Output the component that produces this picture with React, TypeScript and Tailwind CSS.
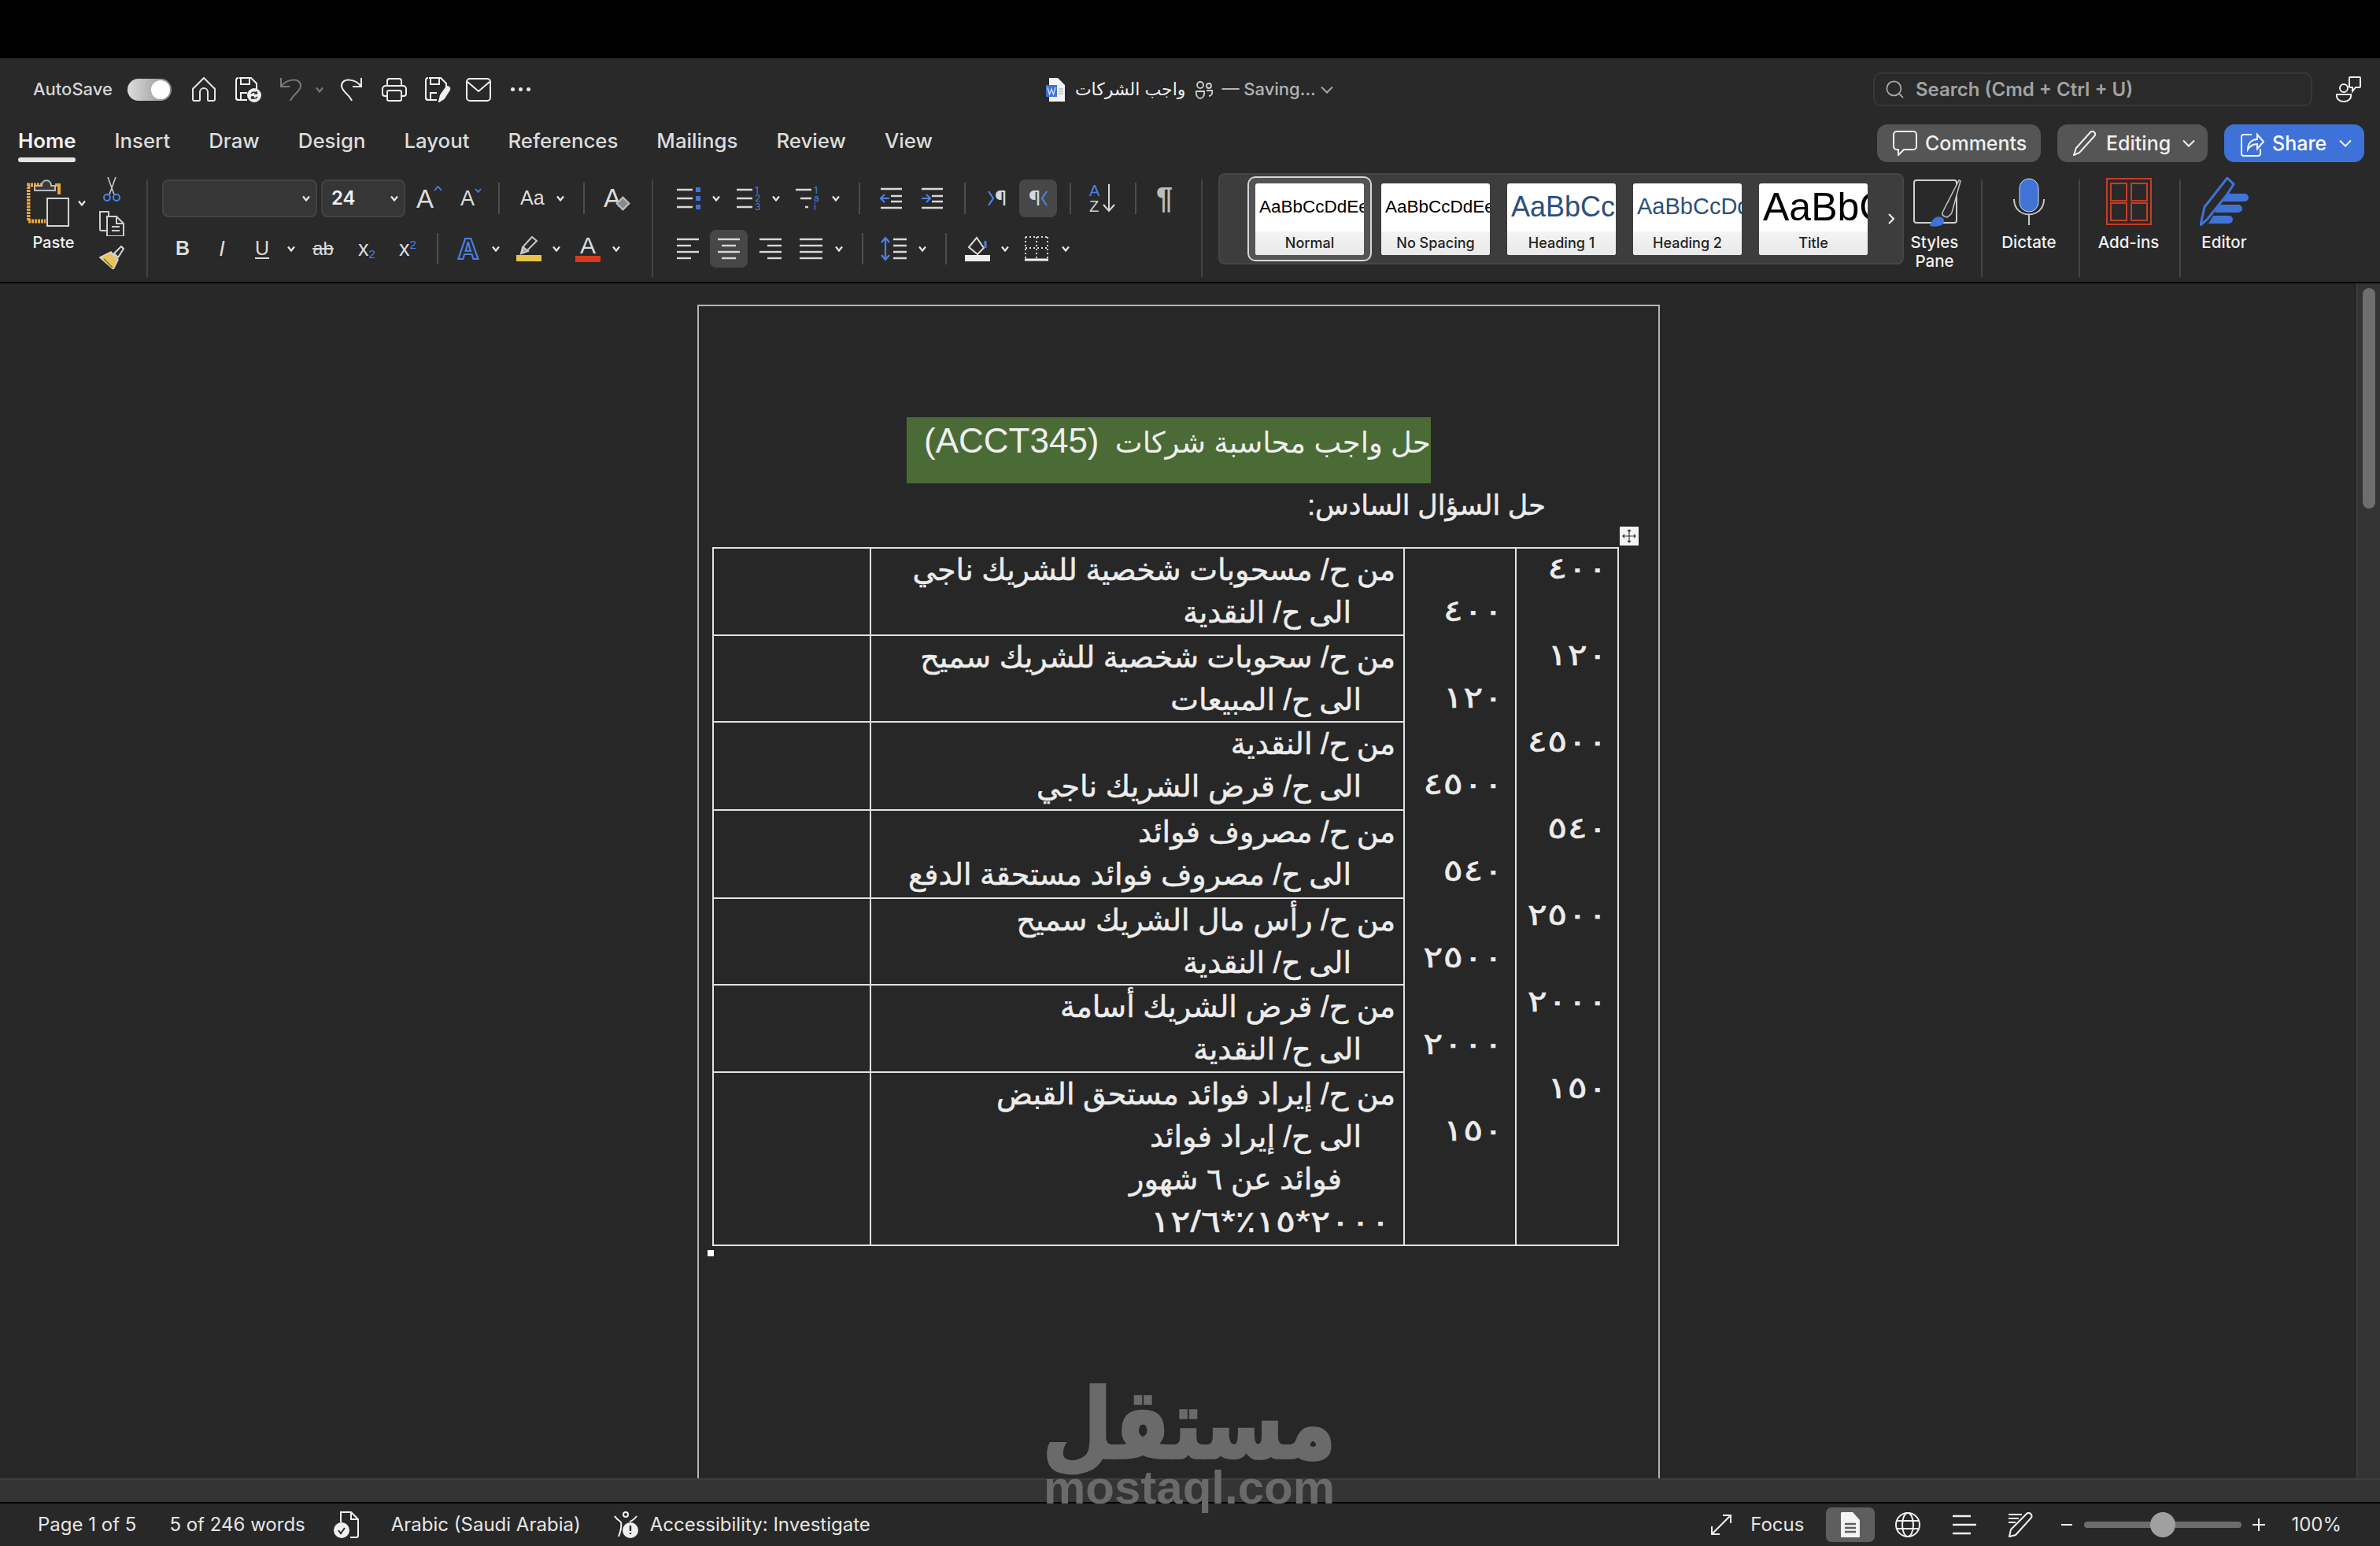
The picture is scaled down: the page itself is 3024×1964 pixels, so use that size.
import { Search } from 'lucide-react';
import type { ReactNode } from 'react';

const arabic = "font-['Liberation_Sans','DejaVu_Sans',sans-serif]";

const TABS = ['Home', 'Insert', 'Draw', 'Design', 'Layout', 'References', 'Mailings', 'Review', 'View'];

const ROWS: { h: string; lines: { text: string; pr: string }[] }[] = [
  { h: 'h-[111px]', lines: [{ text: 'من ح/ مسحوبات شخصية للشريك ناجي', pr: 'pr-[10px]' }, { text: 'الى ح/ النقدية', pr: 'pr-[66px]' }] },
  { h: 'h-[110px]', lines: [{ text: 'من ح/ سحوبات شخصية للشريك سميح', pr: 'pr-[10px]' }, { text: 'الى ح/ المبيعات', pr: 'pr-[53px]' }] },
  { h: 'h-[112px]', lines: [{ text: 'من ح/ النقدية', pr: 'pr-[10px]' }, { text: 'الى ح/ قرض الشريك ناجي', pr: 'pr-[53px]' }] },
  { h: 'h-[112px]', lines: [{ text: 'من ح/ مصروف فوائد', pr: 'pr-[10px]' }, { text: 'الى ح/ مصروف فوائد مستحقة الدفع', pr: 'pr-[66px]' }] },
  { h: 'h-[110px]', lines: [{ text: 'من ح/ رأس مال الشريك سميح', pr: 'pr-[10px]' }, { text: 'الى ح/ النقدية', pr: 'pr-[66px]' }] },
  { h: 'h-[111px]', lines: [{ text: 'من ح/ قرض الشريك أسامة', pr: 'pr-[10px]' }, { text: 'الى ح/ النقدية', pr: 'pr-[53px]' }] },
  {
    h: 'h-[220px]',
    lines: [
      { text: 'من ح/ إيراد فوائد مستحق القبض', pr: 'pr-[10px]' },
      { text: 'الى ح/ إيراد فوائد', pr: 'pr-[53px]' },
      { text: 'فوائد عن ٦ شهور', pr: 'pr-[78px]' },
      { text: '٢٠٠٠*١٥٪*١٢/٦', pr: 'origin-right scale-x-[1.25] pr-[13px]' },
    ],
  },
];

const DEBIT = ['٤٠٠', '١٢٠', '٤٥٠٠', '٥٤٠', '٢٥٠٠', '٢٠٠٠', '١٥٠'];

function Svg({ w, h, className, children }: { w: number; h: number; className?: string; children: ReactNode }) {
  return (
    <svg width={w} height={h} viewBox={`0 0 ${w} ${h}`} fill="none" stroke="#e4e4e4" strokeWidth={2} className={className}>
      {children}
    </svg>
  );
}

function Chev({ className = '' }: { className?: string }) {
  return (
    <svg width={10} height={8} viewBox="0 0 10 8" fill="none" stroke="#e8e8e8" strokeWidth={2.2} className={`shrink-0 ${className}`}>
      <path d="M1 1.5 5 6.5 9 1.5" />
    </svg>
  );
}

function VLine({ className = '' }: { className?: string }) {
  return <div className={`h-[40px] w-[2px] shrink-0 bg-[#4d4d4d] ${className}`} />;
}

function Lines({ rows }: { rows: [number, number][] }) {
  return (
    <svg width={30} height={30} viewBox="0 0 30 30" stroke="#d8d8d8" strokeWidth={2.4} className="shrink-0">
      {rows.map(([x, y], i) => (
        <path key={i} d={`M${x} ${3 + i * 8}h${y}`} />
      ))}
    </svg>
  );
}

function ListIcon({ kind }: { kind: 'bullet' | 'number' | 'multi' }) {
  return (
    <svg width={30} height={30} viewBox="0 0 30 30" className="shrink-0 overflow-visible">
      <g stroke="#d8d8d8" strokeWidth={2.4}>
        {kind === 'multi' ? (
          <>
            <path d="M0 4h20M6 15h14M12 26h4" />
          </>
        ) : (
          <path d="M0 4h20M0 15h20M0 26h20" />
        )}
      </g>
      {kind === 'bullet' && (
        <g fill="#3f74d6">
          <rect x="24" y="1" width="6" height="6" />
          <rect x="24" y="12" width="6" height="6" />
          <rect x="24" y="23" width="6" height="6" />
        </g>
      )}
      {kind !== 'bullet' && (
        <g fill="#4a82e6" fontSize="12" fontFamily="Inter">
          <text x="23" y="9">1</text>
          <text x="23" y="19">{kind === 'number' ? '2' : 'a'}</text>
          <text x="23" y="30">{kind === 'number' ? '3' : 'i'}</text>
        </g>
      )}
    </svg>
  );
}

function Indent({ flip }: { flip?: boolean }) {
  return (
    <svg width={29} height={30} viewBox="0 0 29 30" fill="none" className="shrink-0">
      <path d="M1 3h27M14 12h14M14 19h14M1 27h27" stroke="#d8d8d8" strokeWidth={2.4} />
      <path d={flip ? 'M1 15h10M7 10l5 5-5 5' : 'M12 15H2M6 10l-5 5 5 5'} stroke="#4a82e6" strokeWidth={2.2} />
    </svg>
  );
}

function Para({ rtl }: { rtl?: boolean }) {
  return (
    <div className="flex h-[32px] w-[26px] items-center justify-center gap-[1px]">
      {rtl && <span className="text-[26px] leading-none text-[#d8d8d8]">¶</span>}
      <svg width={8} height={22} viewBox="0 0 8 22" fill="none" stroke="#4a82e6" strokeWidth={2.2} className="shrink-0">
        <path d={rtl ? 'M7 2 1 11l6 9' : 'M1 2l6 9-6 9'} />
      </svg>
      {!rtl && <span className="text-[26px] leading-none text-[#d8d8d8]">¶</span>}
    </div>
  );
}

function Floppy({ pen }: { pen?: boolean }) {
  return (
    <svg width={33} height={32} viewBox="0 0 33 32" fill="none" stroke="#f0f0f0" strokeWidth={2} className="shrink-0">
      <path d="M5 1h15l7 7v9M4 29H4a3 3 0 0 1-3-3V4a3 3 0 0 1 3-3M7 1v8h11V1M7 29v-9h8" />
      <path d="M1 26a3 3 0 0 0 3 3h11" />
      {pen ? (
        <path d="M18 31l2-8 7-10c2-2 5 0 4 3l-7 11Z" fill="#f0f0f0" />
      ) : (
        <>
          <circle cx="24" cy="23" r="8" fill="#f0f0f0" />
          <path d="M20 21a5 5 0 0 1 8 0M28 25a5 5 0 0 1-8 0M27 18v3h-3M21 28v-3h3" stroke="#2a2a2a" strokeWidth={1.6} />
        </>
      )}
    </svg>
  );
}

function TitleBar() {
  return (
    <div className="flex h-[79px] shrink-0 items-center">
      <span className="ml-[42px] text-[22px] font-medium text-[#d6d6d6]">AutoSave</span>
      <div className="ml-[19px] flex h-[28px] w-[56px] items-center justify-end rounded-full bg-gradient-to-r from-[#dedede] to-[#8d8d8d] pr-[2px]">
        <div className="h-[24px] w-[24px] rounded-full bg-white" />
      </div>
      <Svg w={30} h={31} className="ml-[26px] shrink-0">
        <path d="M15 1 28 14a1 1 0 0 1 1 1v13a2 2 0 0 1-2 2h-6a1 1 0 0 1-1-1V19a5 5 0 0 0-10 0v10a1 1 0 0 1-1 1H3a2 2 0 0 1-2-2V15a1 1 0 0 1 1-1Z" />
      </Svg>
      <div className="ml-[25px]">
        <Floppy />
      </div>
      <svg width={27} height={31} viewBox="0 0 27 31" fill="none" stroke="#7a7a7a" strokeWidth={2} className="ml-[24px] shrink-0">
        <path d="M1 1v11h11M1 12C8 2 26 0 26 11c0 7-10 11-13 19" />
      </svg>
      <Chev className="ml-[18px] opacity-40" />
      <svg width={27} height={31} viewBox="0 0 27 31" fill="none" stroke="#f0f0f0" strokeWidth={2} className="ml-[22px] shrink-0">
        <path d="M26 1v11H15M26 12C19 2 1 0 1 11c0 7 10 11 13 19" />
      </svg>
      <Svg w={32} h={30} className="ml-[25px] shrink-0">
        <path d="M7 10V4a3 3 0 0 1 3-3h12a3 3 0 0 1 3 3v6M7 23H4a3 3 0 0 1-3-3v-6a4 4 0 0 1 4-4h22a4 4 0 0 1 4 4v6a3 3 0 0 1-3 3h-3" stroke="#f0f0f0" />
        <rect x="7" y="16" width="18" height="13" rx="2" stroke="#f0f0f0" />
      </Svg>
      <div className="ml-[23px]">
        <Floppy pen />
      </div>
      <Svg w={32} h={31} className="ml-[19px] shrink-0">
        <rect x="1" y="2" width="30" height="28" rx="4" stroke="#f0f0f0" />
        <path d="M2 6l14 12L30 6" stroke="#f0f0f0" />
      </Svg>
      <div className="ml-[25px] flex gap-[5px]">
        <div className="h-[5px] w-[5px] rounded-full bg-[#e8e8e8]" />
        <div className="h-[5px] w-[5px] rounded-full bg-[#e8e8e8]" />
        <div className="h-[5px] w-[5px] rounded-full bg-[#e8e8e8]" />
      </div>
      <svg width={26} height={30} viewBox="0 0 26 30" className="ml-[655px] shrink-0">
        <path d="M4 0h11l9 9v21H4Z" fill="#f4f4f4" />
        <rect x="0" y="9" width="14" height="15" fill="#3f74d6" />
        <path d="M2 12l2.5 9L7 14l2.5 7L12 12" fill="none" stroke="#dfe8fb" strokeWidth={1.2} />
        <path d="M16 14h6M16 17h6M16 20h6" stroke="#8aa6de" strokeWidth={1} />
      </svg>
      <span dir="rtl" className={`ml-[11px] text-[22px] text-[#f0f0f0] ${arabic}`}>
        واجب الشركات
      </span>
      <svg width={24} height={24} viewBox="0 0 24 24" fill="none" stroke="#cfcfcf" strokeWidth={1.8} className="ml-[12px] shrink-0">
        <circle cx="7" cy="6" r="4" />
        <circle cx="18" cy="7" r="3" />
        <path d="M2 14h10a0 0 0 0 1 0 0c1 5-2 9-5 9s-6-4-5-9ZM15 13h7c1 4-1 7-4 7" />
      </svg>
      <span className="ml-[10px] text-[22px] font-medium text-[#b4b4b4]">— Saving...</span>
      <svg width={16} height={10} viewBox="0 0 16 10" fill="none" stroke="#a8a8a8" strokeWidth={2} className="ml-[6px] shrink-0">
        <path d="M1 1.5 8 8.5 15 1.5" />
      </svg>
      <div className="ml-auto flex h-[43px] w-[558px] shrink-0 items-center rounded-[10px] border-2 border-[#373737] bg-[#2a2a2a] pl-[12px]">
        <Search size={27} strokeWidth={1.6} className="text-[#a8a8a8]" />
        <span className="ml-[13px] text-[24px] font-semibold text-[#a2a2a2]">Search (Cmd + Ctrl + U)</span>
      </div>
      <svg width={32} height={33} viewBox="0 0 32 33" fill="none" stroke="#ededed" strokeWidth={2} className="ml-[30px] mr-[24px] shrink-0">
        <circle cx="10" cy="15" r="5" />
        <path d="M1 23h18c1 5-3 9-9 9s-10-4-9-9Z" />
        <path d="M18 1h12a1 1 0 0 1 1 1v11a1 1 0 0 1-1 1h-5l-4 5v-5h-3a1 1 0 0 1-1-1V2a1 1 0 0 1 1-1Z" fill="#2a2a2a" />
      </svg>
    </div>
  );
}

function TabsRow() {
  return (
    <div className="flex h-[55px] shrink-0 items-start">
      <div className="ml-[23px] flex w-[1180px] shrink-0 gap-[49px] pt-[10px]">
        {TABS.map((t) => (
          <div key={t} className="relative">
            <span className={`text-[25.8px] leading-[32px] ${t === 'Home' ? 'font-semibold text-[#f2f2f2]' : 'font-medium text-[#dcdcdc]'}`}>{t}</span>
            {t === 'Home' && <div className="absolute left-0 right-0 top-[37px] h-[6px] rounded-full bg-[#e4e4e4]" />}
          </div>
        ))}
      </div>
      <div className="ml-[1182px] flex gap-[21px] pt-[5px]">
        <div className="flex h-[48px] w-[208px] items-center rounded-[13px] bg-[#555555] pl-[20px]">
          <svg width={31} height={32} viewBox="0 0 31 32" fill="none" stroke="#f0f0f0" strokeWidth={2} className="shrink-0">
            <path d="M5 1h21a4 4 0 0 1 4 4v15a4 4 0 0 1-4 4H14l-7 7v-7H5a4 4 0 0 1-4-4V5a4 4 0 0 1 4-4Z" />
          </svg>
          <span className="ml-[10px] pt-[2px] text-[25px] font-medium text-[#f0f0f0]">Comments</span>
        </div>
        <div className="flex h-[48px] w-[191px] items-center rounded-[13px] bg-[#555555] pl-[20px]">
          <svg width={32} height={32} viewBox="0 0 32 32" fill="none" stroke="#f0f0f0" strokeWidth={2} className="shrink-0">
            <path d="M1 31l3-9L22 2c2-2 5 0 5 0 2 2 1 4 0 5L8 28Z" />
          </svg>
          <span className="ml-[10px] pt-[2px] text-[25px] font-medium text-[#f0f0f0]">Editing</span>
          <svg width={16} height={10} viewBox="0 0 16 10" fill="none" stroke="#f0f0f0" strokeWidth={2} className="ml-[15px] shrink-0">
            <path d="M1 1.5 8 8.5 15 1.5" />
          </svg>
        </div>
        <div className="flex h-[48px] w-[178px] items-center rounded-[13px] bg-[#3f72d8] pl-[21px]">
          <svg width={30} height={34} viewBox="0 0 30 34" fill="none" stroke="#f4f4f4" strokeWidth={2} className="shrink-0">
            <path d="M14 6H4a3 3 0 0 0-3 3v21a3 3 0 0 0 3 3h18a3 3 0 0 0 3-3v-6" />
            <path d="M9 25c0-9 6-13 12-13V6l8 9-8 9v-6c-5 0-9 2-12 7Z" />
          </svg>
          <span className="ml-[10px] pt-[2px] text-[25px] font-medium text-white">Share</span>
          <svg width={16} height={10} viewBox="0 0 16 10" fill="none" stroke="#f0f0f0" strokeWidth={2} className="ml-[16px] shrink-0">
            <path d="M1 1.5 8 8.5 15 1.5" />
          </svg>
        </div>
      </div>
    </div>
  );
}

function PasteGroup() {
  return (
    <div className="flex w-[186px] shrink-0 pl-[34px]">
      <div className="w-[75px] shrink-0">
        <div className="flex h-[60px] items-center">
          <svg width={54} height={60} viewBox="0 0 54 60" fill="none" className="shrink-0">
            <path d="M20 7H2v46h22" stroke="#e9a53f" strokeWidth={5} strokeDasharray="3 1" />
            <path d="M36 7h5v12" stroke="#e9a53f" strokeWidth={4} />
            <path d="M10 14V8h9c0-9 12-9 12 0h5v6Z" fill="#3a3a3a" stroke="#bdbdbd" strokeWidth={2} />
            <rect x="26" y="24" width="27" height="35" stroke="#d4d4d4" strokeWidth={2} />
          </svg>
          <Chev className="ml-[11px]" />
        </div>
        <div className="mt-[8px] w-[68px] text-center text-[20px] font-medium leading-[24px] text-[#f0f0f0]">Paste</div>
      </div>
      <div className="ml-[17px] -mt-[4px] flex w-[32px] shrink-0 flex-col gap-[12px]">
        <svg width={32} height={32} viewBox="0 0 32 32" fill="none" className="shrink-0">
          <path d="M11 1l8 22M21 1l-8 22" stroke="#c8c8c8" strokeWidth={1.6} />
          <circle cx="10" cy="27" r="4" stroke="#4a82e6" strokeWidth={2} />
          <circle cx="22" cy="27" r="4" stroke="#4a82e6" strokeWidth={2} />
        </svg>
        <Svg w={32} h={32}>
          <path d="M10 25H3a2 2 0 0 1-2-2V1h11v6" stroke="#cfcfcf" />
          <path d="M10 7h12l9 9v16H10ZM22 7v9h9M16 20h10M16 25h10" stroke="#cfcfcf" />
        </Svg>
        <svg width={32} height={30} viewBox="0 0 32 30" fill="none" className="shrink-0">
          <path d="M19 10 28 1l3 3-7 11Z" stroke="#d8d8d8" strokeWidth={2} />
          <path d="M1 15 15 8l9 10-6 12Z" fill="#e8c35a" stroke="#d8d8d8" strokeWidth={1.6} />
          <path d="M6 17l11 11" stroke="#8a6d1f" strokeWidth={1.6} />
        </svg>
      </div>
    </div>
  );
}

function FontGroup() {
  return (
    <div className="flex w-[640px] shrink-0 flex-col gap-[16px]">
      <div className="flex h-[48px] items-center pl-[18px]">
        <div className="flex h-[48px] w-[197px] items-center justify-end rounded-[8px] border-2 border-[#434343] bg-[#363636] pr-[7px]">
          <Chev />
        </div>
        <div className="ml-[5px] flex h-[48px] w-[107px] items-center justify-between rounded-[8px] border-2 border-[#434343] bg-[#363636] pl-[11px] pr-[7px]">
          <span className="text-[24px] font-semibold text-[#f0f0f0]">24</span>
          <Chev />
        </div>
        <div className="ml-[14px] flex w-[32px] items-start">
          <span className={`text-[33px] leading-none text-[#dcdcdc] ${arabic}`}>A</span>
          <svg width={11} height={7} viewBox="0 0 11 7" fill="none" stroke="#4a82e6" strokeWidth={1.8} className="shrink-0"><path d="M1 6l4.5-5L10 6" /></svg>
        </div>
        <div className="ml-[24px] flex w-[27px] items-start">
          <span className={`text-[27px] leading-none text-[#dcdcdc] ${arabic}`}>A</span>
          <svg width={9} height={6} viewBox="0 0 9 6" fill="none" stroke="#4a82e6" strokeWidth={1.8} className="shrink-0"><path d="M1 1l3.5 4L8 1" /></svg>
        </div>
        <VLine className="ml-[21px]" />
        <span className={`ml-[26px] w-[34px] text-[25px] text-[#dcdcdc] ${arabic}`}>Aa</span>
        <Chev className="ml-[12px]" />
        <VLine className="ml-[24px]" />
        <div className="relative ml-[24px] h-[34px] w-[32px]">
          <span className={`text-[33px] leading-none text-[#dcdcdc] ${arabic}`}>A</span>
          <div className="absolute bottom-[4px] right-[1px] h-[13px] w-[13px] rotate-45 border-2 border-[#bcbcbc] bg-[#8a8a8a]" />
        </div>
      </div>
      <div className="flex h-[48px] items-center pl-[35px] text-[#dcdcdc]">
        <span className={`w-[16px] text-[25px] font-bold ${arabic}`}>B</span>
        <span className={`ml-[35px] w-[16px] text-center text-[27px] italic ${arabic}`}>I</span>
        <span className={`ml-[34px] w-[18px] text-[25px] underline underline-offset-[3px] ${arabic}`}>U</span>
        <Chev className="ml-[23px]" />
        <span className={`ml-[20px] w-[31px] text-center text-[24px] line-through ${arabic}`}>ab</span>
        <span className={`ml-[29px] flex w-[22px] items-end text-[27px] leading-none ${arabic}`}>
          x<span className="text-[15px] text-[#4a82e6]">2</span>
        </span>
        <span className={`ml-[30px] flex w-[22px] items-start text-[27px] leading-none ${arabic}`}>
          x<span className="text-[15px] text-[#4a82e6]">2</span>
        </span>
        <VLine className="ml-[26px]" />
        <span className="ml-[22px] w-[32px] text-center text-[36px] font-bold leading-none text-[#2b2b2b] [-webkit-text-stroke:2px_#4a82e6]">A</span>
        <Chev className="ml-[14px]" />
        <div className="ml-[21px] flex w-[32px] flex-col items-center">
          <svg width={28} height={24} viewBox="0 0 28 24" fill="none" stroke="#c8c8c8" strokeWidth={2} className="shrink-0">
            <path d="M4 22l2-8L18 1l6 5-13 13Z" />
            <path d="M5 22l2-8 6 5Z" fill="#9a9a9a" />
          </svg>
          <div className="h-[8px] w-[32px] bg-[#e9c44a]" />
        </div>
        <Chev className="ml-[14px]" />
        <div className="ml-[19px] flex w-[32px] flex-col items-center">
          <span className={`text-[30px] leading-[26px] ${arabic}`}>A</span>
          <div className="h-[8px] w-[32px] bg-[#d9391f]" />
        </div>
        <Chev className="ml-[15px]" />
      </div>
    </div>
  );
}

function ParaGroup() {
  return (
    <div className="flex w-[696px] shrink-0 flex-col gap-[16px]">
      <div className="flex h-[48px] items-center pl-[30px]">
        <ListIcon kind="bullet" />
        <Chev className="ml-[15px]" />
        <div className="ml-[21px]"><ListIcon kind="number" /></div>
        <Chev className="ml-[15px]" />
        <div className="ml-[20px]"><ListIcon kind="multi" /></div>
        <Chev className="ml-[16px]" />
        <VLine className="ml-[24px]" />
        <div className="ml-[25px]"><Indent /></div>
        <div className="ml-[23px]"><Indent flip /></div>
        <VLine className="ml-[26px]" />
        <div className="ml-[27px]"><Para /></div>
        <div className="ml-[15px] flex h-[48px] w-[48px] items-center justify-center rounded-[8px] bg-[#474747]"><Para rtl /></div>
        <VLine className="ml-[16px]" />
        <div className="ml-[23px] flex w-[35px] items-center">
          <div className={`flex w-[17px] flex-col text-[20px] leading-[20px] ${arabic}`}>
            <span className="text-[#4a82e6]">A</span>
            <span className="text-[#cfcfcf]">Z</span>
          </div>
          <svg width={16} height={36} viewBox="0 0 16 36" fill="none" stroke="#d8d8d8" strokeWidth={2} className="shrink-0">
            <path d="M8 0v34M1 26l7 8 7-8" />
          </svg>
        </div>
        <VLine className="ml-[23px]" />
        <span className={`ml-[25px] text-[38px] font-bold leading-none text-[#bcbcbc] ${arabic}`}>¶</span>
      </div>
      <div className="flex h-[48px] items-center pl-[30px]">
        <Lines rows={[[0, 28], [0, 18], [0, 28], [0, 18]]} />
        <div className="ml-[12px] flex h-[48px] w-[48px] items-center justify-center rounded-[8px] bg-[#474747]">
          <Lines rows={[[1, 28], [6, 18], [1, 28], [6, 18]]} />
        </div>
        <div className="ml-[14px]"><Lines rows={[[1, 28], [11, 18], [1, 28], [11, 18]]} /></div>
        <div className="ml-[22px]"><Lines rows={[[0, 29], [0, 29], [0, 29], [0, 29]]} /></div>
        <Chev className="ml-[15px]" />
        <VLine className="ml-[24px]" />
        <svg width={33} height={30} viewBox="0 0 33 30" fill="none" className="ml-[22px] shrink-0">
          <path d="M16 3h17M16 11h17M16 19h17M16 27h17" stroke="#d8d8d8" strokeWidth={2.4} />
          <path d="M6 2v26M1 7l5-6 5 6M1 23l5 6 5-6" stroke="#4a82e6" strokeWidth={2.2} />
        </svg>
        <Chev className="ml-[15px]" />
        <VLine className="ml-[24px]" />
        <div className="ml-[23px] flex w-[32px] flex-col items-center">
          <svg width={28} height={24} viewBox="0 0 28 24" fill="none" stroke="#d8d8d8" strokeWidth={2} className="shrink-0">
            <path d="M3 14 13 2l9 13-8 8Z" />
            <path d="M24 6v9" stroke="#4a82e6" strokeWidth={3} />
          </svg>
          <div className="h-[8px] w-[32px] bg-[#efefef]" />
        </div>
        <Chev className="ml-[14px]" />
        <svg width={30} height={32} viewBox="0 0 30 32" fill="none" stroke="#d8d8d8" strokeWidth={2} className="ml-[20px] shrink-0">
          <path d="M1 1h28M1 1v27M29 1v27M15 1v27M1 15h28" strokeDasharray="2 3" />
          <path d="M0 30h30" stroke="#f4f4f4" strokeWidth={3} />
        </svg>
        <Chev className="ml-[17px]" />
      </div>
    </div>
  );
}

function StyleCard({ label, sample, className }: { label: string; sample: string; className: string }) {
  return (
    <div className="flex h-[91px] w-[138px] shrink-0 flex-col overflow-hidden rounded-[3px] bg-white">
      <div className={`flex h-[61px] items-center overflow-hidden whitespace-nowrap pl-[5px] font-['Liberation_Sans',sans-serif] ${className}`}>{sample}</div>
      <div className="flex h-[30px] items-center justify-center bg-gradient-to-b from-[#f4f4f4] to-[#e9e9e9] text-[18px] font-medium text-[#222222]">{label}</div>
    </div>
  );
}

function StyleGallery() {
  return (
    <div className="ml-[20px] -mt-[8px] flex h-[116px] w-[871px] shrink-0 items-center rounded-[8px] border-2 border-[#464646] bg-[#3d3d3d] pl-[35px]">
      <div className="flex h-[108px] w-[158px] shrink-0 items-center justify-center rounded-[10px] border-2 border-[#d6d6d6] bg-[#545454]">
        <StyleCard label="Normal" sample="AaBbCcDdEe" className="text-[22.5px] text-black" />
      </div>
      <div className="ml-[12px]">
        <StyleCard label="No Spacing" sample="AaBbCcDdEe" className="text-[22.5px] text-black" />
      </div>
      <div className="ml-[22px]">
        <StyleCard label="Heading 1" sample="AaBbCcD" className="text-[36px] text-[#2c4f7c]" />
      </div>
      <div className="ml-[22px]">
        <StyleCard label="Heading 2" sample="AaBbCcDd" className="text-[29px] text-[#2c4f7c]" />
      </div>
      <div className="ml-[22px]">
        <StyleCard label="Title" sample="AaBbCc" className="text-[50px] text-black" />
      </div>
      <svg width={8} height={14} viewBox="0 0 8 14" fill="none" stroke="#f0f0f0" strokeWidth={2} className="ml-[26px] shrink-0">
        <path d="M1 1l6 6-6 6" />
      </svg>
    </div>
  );
}

function ToolLabel({ children }: { children: ReactNode }) {
  return <div className="text-center text-[20.5px] font-medium leading-[24px] text-[#f0f0f0]">{children}</div>;
}

function RibbonDivider() {
  return <div className="h-[124px] w-[2px] shrink-0 bg-[#444444]" />;
}

function Ribbon() {
  return (
    <div className="flex h-[150px] shrink-0 items-start pt-[20px]">
      <PasteGroup />
      <RibbonDivider />
      <FontGroup />
      <RibbonDivider />
      <ParaGroup />
      <RibbonDivider />
      <StyleGallery />
      <div className="flex w-[98px] shrink-0 flex-col items-center pr-[20px]">
        <svg width={62} height={60} viewBox="0 0 62 60" fill="none" className="shrink-0 translate-x-[4px]">
          <rect x="1" y="1" width="54" height="54" rx="3" stroke="#cfcfcf" strokeWidth={2} />
          <path d="M58 1 38 40c-2 4-1 6 2 7l3 1c3-2 5-3 6-6l11-40Z" fill="#2b2b2b" stroke="#bdbdbd" strokeWidth={1.6} />
          <path d="M21 59c2-8 8-14 15-11 5 2 3 8 0 10-4 2-10 2-15 1Z" fill="#3f74d6" />
        </svg>
        <div className="mt-[8px]">
          <ToolLabel>Styles</ToolLabel>
          <ToolLabel>Pane</ToolLabel>
        </div>
      </div>
      <RibbonDivider />
      <div className="flex w-[122px] shrink-0 flex-col items-center pr-[4px] -mt-[2px]">
        <svg width={40} height={60} viewBox="0 0 40 60" fill="none" className="shrink-0">
          <rect x="8" y="1" width="24" height="42" rx="12" fill="#3f74d6" stroke="#cfd8ea" strokeWidth={1} />
          <path d="M1 27c0 26 38 26 38 0M20 47v13" stroke="#c8c8c8" strokeWidth={2} />
        </svg>
        <div className="mt-[10px]"><ToolLabel>Dictate</ToolLabel></div>
      </div>
      <RibbonDivider />
      <div className="flex w-[126px] shrink-0 flex-col items-center pr-[3px] -mt-[2px]">
        <svg width={58} height={60} viewBox="0 0 58 60" fill="none" stroke="#c43e26" strokeWidth={2} className="shrink-0">
          <rect x="1" y="1" width="56" height="58" />
          <rect x="6" y="7" width="20" height="22" />
          <rect x="32" y="7" width="20" height="22" />
          <rect x="6" y="32" width="20" height="22" />
          <rect x="32" y="32" width="20" height="22" />
        </svg>
        <div className="mt-[10px]"><ToolLabel>Add-ins</ToolLabel></div>
      </div>
      <RibbonDivider />
      <div className="flex w-[110px] shrink-0 flex-col items-center -mt-[3px]">
        <svg width={62} height={62} viewBox="0 0 62 62" fill="none" className="shrink-0">
          <path d="M31 21h26a5 5 0 0 1 0 10H27ZM25 35h24a5 5 0 0 1 0 10H19ZM17 49h20a5 5 0 0 1 0 10H11Z" fill="#3f74d6" />
          <path d="M1 61 6 38 35 1l8 8-9 14-24 30Z" fill="#2a2a2a" stroke="#3f74d6" strokeWidth={3} />
        </svg>
        <div className="mt-[9px]"><ToolLabel>Editor</ToolLabel></div>
      </div>
    </div>
  );
}

function JournalTable() {
  return (
    <table className="ml-[17px] mt-[25px] w-[1150px] table-fixed border-collapse border-2 border-[#e2e2e2] text-[#ececec] [-webkit-text-stroke:0.5px_#ececec]">
      <colgroup>
        <col className="w-[200px]" />
        <col className="w-[678px]" />
        <col className="w-[142px]" />
        <col className="w-[130px]" />
      </colgroup>
      <tbody>
        {ROWS.map((row, i) => (
          <tr key={i}>
            <td className={`border-2 border-[#e2e2e2] p-0 ${row.h}`} />
            <td className={`border-2 border-[#e2e2e2] p-0 align-top ${row.h}`}>
              {row.lines.map((line) => (
                <div key={line.text} dir="rtl" className={`h-[54px] whitespace-nowrap text-[38px] leading-[54px] ${arabic} ${line.pr}`}>
                  {line.text}
                </div>
              ))}
            </td>
            {i === 0 && (
              <>
                <td rowSpan={7} className="border-2 border-[#e2e2e2] p-0 align-top">
                  <div className="flex flex-col gap-[56px] overflow-hidden pt-[52px]">
                    {DEBIT.map((n, j) => (
                      <div key={j} dir="rtl" className={`h-[54px] origin-right scale-x-[1.25] pr-[12px] text-[38px] leading-[54px] ${arabic}`}>{n}</div>
                    ))}
                  </div>
                </td>
                <td rowSpan={7} className="border-2 border-[#e2e2e2] p-0 align-top">
                  <div className="-mt-[2px] flex flex-col gap-[56px]">
                    {DEBIT.map((n, j) => (
                      <div key={j} dir="rtl" className={`h-[54px] origin-right scale-x-[1.25] pr-[10px] text-[38px] leading-[54px] ${arabic}`}>{n}</div>
                    ))}
                  </div>
                </td>
              </>
            )}
          </tr>
        ))}
      </tbody>
    </table>
  );
}

function Document() {
  return (
    <div className="relative flex min-h-0 flex-1">
      <div className="min-w-0 flex-1 pl-[886px] pt-[27px]">
        <div className="relative h-full w-[1223px] border-2 border-b-0 border-[#b4b4b4] pt-[141px]">
          <div dir="rtl" className={`ml-[264px] h-[84px] w-[666px] bg-[#4a6b35] text-[37px] leading-[60px] text-[#efefef] ${arabic}`}>
            حل واجب محاسبة شركات <span className="mr-[10px] text-[44px]">(ACCT345)</span>
          </div>
          <div dir="rtl" className={`h-[56px] whitespace-nowrap pr-[143px] text-[35px] leading-[56px] text-[#ececec] [-webkit-text-stroke:0.5px_#ececec] ${arabic}`}>
            حل السؤال السادس:
          </div>
          <JournalTable />
          <div className="absolute left-[1170px] top-[280px] flex h-[24px] w-[24px] items-center justify-center bg-[#f4f4f4]">
            <svg width={18} height={18} viewBox="0 0 18 18" fill="none" stroke="#333333" strokeWidth={1.2}>
              <path d="M9 1v16M1 9h16M7 3l2-2 2 2M7 15l2 2 2-2M3 7 1 9l2 2M15 7l2 2-2 2" />
            </svg>
          </div>
          <div className="absolute left-[11px] top-[1199px] h-[8px] w-[8px] bg-white" />
        </div>
      </div>
      <div className="w-[30px] shrink-0 border-l-2 border-[#3d3d3d] bg-[#333333] pl-[6px] pt-[6px]">
        <div className="h-[280px] w-[16px] rounded-full bg-[#6e6e6e]" />
      </div>
    </div>
  );
}

function StatusBar() {
  return (
    <div className="flex h-[54px] shrink-0 items-center bg-[#282828] text-[24px] text-[#e6e6e6]">
      <span className="ml-[48px]">Page 1 of 5</span>
      <span className="ml-[42px]">5 of 246 words</span>
      <svg width={32} height={34} viewBox="0 0 32 34" fill="none" stroke="#f0f0f0" strokeWidth={2} className="ml-[36px] shrink-0">
        <path d="M9 14V1h13l9 9v21a2 2 0 0 1-2 2H21M22 1v9h9" />
        <circle cx="10" cy="24" r="9" fill="#f0f0f0" />
        <path d="M6 24l3 4 5-7" stroke="#282828" strokeWidth={2} />
      </svg>
      <span className="ml-[41px]">Arabic (Saudi Arabia)</span>
      <svg width={32} height={34} viewBox="0 0 32 34" fill="none" stroke="#f0f0f0" strokeWidth={2} className="ml-[41px] shrink-0">
        <circle cx="16" cy="4" r="3" />
        <path d="M2 6c3 5 7 6 8 8 1 4 0 10-3 18M30 6c-3 4-6 6-9 7" />
        <circle cx="22" cy="24" r="9" fill="#f0f0f0" />
        <path d="M22 18v7M22 27v2" stroke="#282828" strokeWidth={2.4} />
      </svg>
      <span className="ml-[15px]">Accessibility: Investigate</span>
      <svg width={26} height={26} viewBox="0 0 26 26" fill="none" stroke="#f0f0f0" strokeWidth={2} className="ml-auto shrink-0">
        <path d="M1 25 25 1M15 1h10v10M1 15v10h10" />
      </svg>
      <span className="ml-[24px]">Focus</span>
      <div className="ml-[28px] flex h-[44px] w-[62px] shrink-0 items-center justify-center rounded-[7px] bg-[#5e5e5e]">
        <svg width={24} height={32} viewBox="0 0 24 32" className="shrink-0">
          <path d="M1 0h14l9 10v21a1 1 0 0 1-1 1H1a1 1 0 0 1-1-1V1Z" fill="#f4f4f4" />
          <path d="M5 15h14M5 20h14M5 25h14" stroke="#5e5e5e" strokeWidth={2.4} />
        </svg>
      </div>
      <svg width={32} height={32} viewBox="0 0 32 32" fill="none" stroke="#f0f0f0" strokeWidth={2} className="ml-[26px] shrink-0">
        <circle cx="16" cy="16" r="15" />
        <ellipse cx="16" cy="16" rx="7" ry="15" />
        <path d="M2 11h28M2 21h28" />
      </svg>
      <svg width={31} height={26} viewBox="0 0 31 26" fill="none" stroke="#f0f0f0" strokeWidth={2.4} className="ml-[40px] shrink-0">
        <path d="M1 2h23M1 13h30M1 24h23" />
      </svg>
      <svg width={32} height={32} viewBox="0 0 32 32" fill="none" stroke="#f0f0f0" strokeWidth={2} className="ml-[41px] shrink-0">
        <path d="M0 3h17M0 8h13M0 13h9M1 31l2-9L23 2c3-3 8 1 6 5L9 29Z" />
      </svg>
      <div className="ml-[35px] h-[2px] w-[14px] shrink-0 bg-[#f0f0f0]" />
      <div className="relative ml-[15px] h-[8px] w-[200px] shrink-0 rounded-full bg-[#6c6c6c]">
        <div className="absolute left-[84px] top-[-12px] h-[32px] w-[32px] rounded-full bg-[#a0a0a0]" />
      </div>
      <div className="relative ml-[14px] h-[16px] w-[16px] shrink-0">
        <div className="absolute left-0 top-[7px] h-[2px] w-[16px] bg-[#f0f0f0]" />
        <div className="absolute left-[7px] top-0 h-[16px] w-[2px] bg-[#f0f0f0]" />
      </div>
      <span className="ml-[33px] mr-[49px]">100%</span>
    </div>
  );
}

export default function App() {
  return (
    <div className="relative flex h-[1964px] w-[3024px] flex-col overflow-hidden bg-black font-['Inter',sans-serif]">
      <div className="h-[74px] shrink-0 bg-black" />
      <div className="flex h-[284px] shrink-0 flex-col bg-[#292929]">
        <TitleBar />
        <TabsRow />
        <Ribbon />
      </div>
      <div className="h-[2px] shrink-0 bg-black" />
      <div className="flex min-h-0 flex-1 flex-col bg-[#272727]">
        <Document />
        <div className="h-[30px] shrink-0 border-t-2 border-[#3d3d3d] bg-[#343434]" />
      </div>
      <div className="h-[2px] shrink-0 bg-black" />
      <StatusBar />
      <div className="pointer-events-none absolute left-[1330px] top-[1746px] flex w-[362px] flex-col items-center pt-[14px] text-[#6a6a6a]">
        <span dir="rtl" className="scale-y-[1.2] font-['DejaVu_Sans',sans-serif] text-[102px] font-bold leading-[100px] [-webkit-text-stroke:3px_#6a6a6a]">مستقل</span>
        <span className="font-['Liberation_Sans',sans-serif] text-[60px] font-bold leading-[60px]">mostaql.com</span>
      </div>
    </div>
  );
}
